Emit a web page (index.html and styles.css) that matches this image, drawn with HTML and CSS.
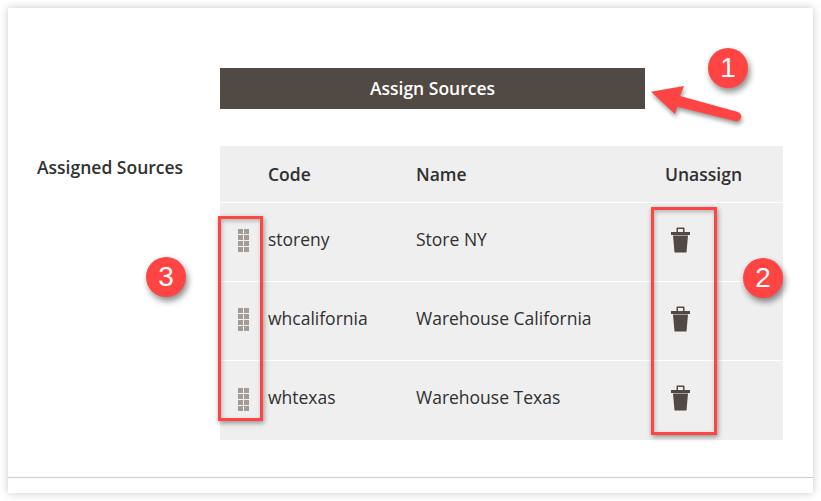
FILE: index.html
```html
<!DOCTYPE html>
<html lang="en">
<head>
    <meta charset="UTF-8">
    <title>Assign Sources</title>
    <link rel="stylesheet" href="styles.css">
</head>
<body>
    <div class="panel">
        <div class="panel-body">
            <button type="button" class="assign-button">Assign Sources</button>
            <div class="field-row">
                <div class="field-label">Assigned Sources</div>
                <table class="sources-table">
                    <thead>
                        <tr>
                            <th class="col-drag"></th>
                            <th class="col-code">Code</th>
                            <th class="col-name">Name</th>
                            <th>Unassign</th>
                        </tr>
                    </thead>
                    <tbody>
                        <tr>
                            <td><span class="drag-handle"><i></i><i></i><i></i><i></i><i></i><i></i><i></i><i></i></span></td>
                            <td>storeny</td>
                            <td>Store NY</td>
                            <td><svg class="trash" viewBox="0 0 19 26"><path fill-rule="evenodd" d="M5.500 5V1.200a.7.7 0 0 1 .7-.7h6.600a.7.7 0 0 1 .7.7V5H19v3H0V5zM7 5h5V2H7zM2 8.500h15l-1.500 17h-12z"/></svg></td>
                        </tr>
                        <tr>
                            <td><span class="drag-handle"><i></i><i></i><i></i><i></i><i></i><i></i><i></i><i></i></span></td>
                            <td>whcalifornia</td>
                            <td>Warehouse California</td>
                            <td><svg class="trash" viewBox="0 0 19 26"><path fill-rule="evenodd" d="M5.500 5V1.200a.7.7 0 0 1 .7-.7h6.600a.7.7 0 0 1 .7.7V5H19v3H0V5zM7 5h5V2H7zM2 8.500h15l-1.500 17h-12z"/></svg></td>
                        </tr>
                        <tr>
                            <td><span class="drag-handle"><i></i><i></i><i></i><i></i><i></i><i></i><i></i><i></i></span></td>
                            <td>whtexas</td>
                            <td>Warehouse Texas</td>
                            <td><svg class="trash" viewBox="0 0 19 26"><path fill-rule="evenodd" d="M5.500 5V1.200a.7.7 0 0 1 .7-.7h6.600a.7.7 0 0 1 .7.7V5H19v3H0V5zM7 5h5V2H7zM2 8.500h15l-1.500 17h-12z"/></svg></td>
                        </tr>
                    </tbody>
                </table>
            </div>
        </div>
        <div class="panel-footer"></div>

        <!-- callouts drawn on top of the screenshot -->
        <div class="badge badge-1">1</div>
        <div class="badge badge-2">2</div>
        <div class="badge badge-3">3</div>
        <div class="marker marker-trash"></div>
        <div class="marker marker-drag"></div>
        <svg class="arrow" viewBox="0 0 100 50">
            <path d="M3 9.700 L36 4 L32 14 L90 30 A4.700 4.700 0 0 1 87 39 L29.300 24.700 L27 32 Z"/>
        </svg>
    </div>
</body>
</html>
```

FILE: styles.css
```css
html, body {
    margin: 0;
    padding: 0;
    height: 501px;
    overflow: hidden;
}
body {
    font-family: 'Open Sans', sans-serif;
    background-color: #ffffff;
    color: #303030;
    padding: 8px;
    box-sizing: border-box;
}
.panel {
    position: relative;
    width: 805px;
    height: 485px;
    background-color: #fff;
    box-shadow: 0 0 8px rgba(0, 0, 0, 0.22);
    display: flex;
    flex-direction: column;
    justify-content: space-between;
}
.panel-body {
    padding: 60px 30px 0 212px;
}
.panel-footer {
    height: 15px;
    border-top: 1px solid #cccccc;
}
.assign-button {
    display: block;
    width: 425px;
    height: 41px;
    padding: 0 0 1px;
    border: none;
    background-color: #514943;
    color: #fff;
    font-family: inherit;
    font-size: 17.5px;
    font-weight: 600;
}
.field-row {
    position: relative;
    margin-top: 37px;
}
.field-label {
    position: absolute;
    left: -183px;
    top: 9px;
    font-size: 17.5px;
    font-weight: 600;
    white-space: nowrap;
}
.sources-table {
    width: 563px;
    border-collapse: collapse;
    table-layout: fixed;
    background-color: #efefef;
    font-size: 17.5px;
}
.sources-table th {
    height: 56px;
    padding: 0;
    text-align: left;
    font-weight: 600;
}
.sources-table td {
    height: 71px;
    padding: 0 0 7px;
    border-top: 1px solid #ffffff;
}
.sources-table tr:last-child td {
    height: 72px;
}
.col-drag {
    width: 48px;
}
.col-code {
    width: 148px;
}
.col-name {
    width: 249px;
}
.drag-handle {
    display: grid;
    grid-template-columns: 5px 5px;
    grid-auto-rows: 5px;
    gap: 1px;
    width: 11px;
    margin: 4px 0 0 18px;
}
.drag-handle i {
    background-color: #a39c96;
}
.trash {
    display: block;
    width: 19px;
    height: 26px;
    margin: 2px 0 0 6px;
    fill: #514943;
}
.badge {
    position: absolute;
    width: 40px;
    height: 40px;
    border-radius: 50%;
    background-color: #ff4444;
    color: #fff;
    font-family: 'Liberation Sans', sans-serif;
    font-size: 28px;
    line-height: 40px;
    text-align: center;
    box-shadow: 2px 4px 6px rgba(0, 0, 0, 0.45);
}
.badge-1 {
    left: 700px;
    top: 40px;
}
.badge-2 {
    left: 735px;
    top: 250px;
}
.badge-3 {
    left: 138px;
    top: 249px;
}
.marker {
    position: absolute;
    border: 3px solid #ff4444;
    box-shadow: 1px 2px 5px rgba(0, 0, 0, 0.4), inset 1px 2px 4px rgba(0, 0, 0, 0.25);
    box-sizing: border-box;
}
.marker-trash {
    left: 643px;
    top: 199px;
    width: 66px;
    height: 228px;
}
.marker-drag {
    left: 210px;
    top: 208px;
    width: 45px;
    height: 205px;
}
.arrow {
    position: absolute;
    left: 640px;
    top: 74px;
    width: 100px;
    height: 50px;
    fill: #ff4444;
    filter: drop-shadow(1px 3px 2px rgba(0, 0, 0, 0.4));
}
```
